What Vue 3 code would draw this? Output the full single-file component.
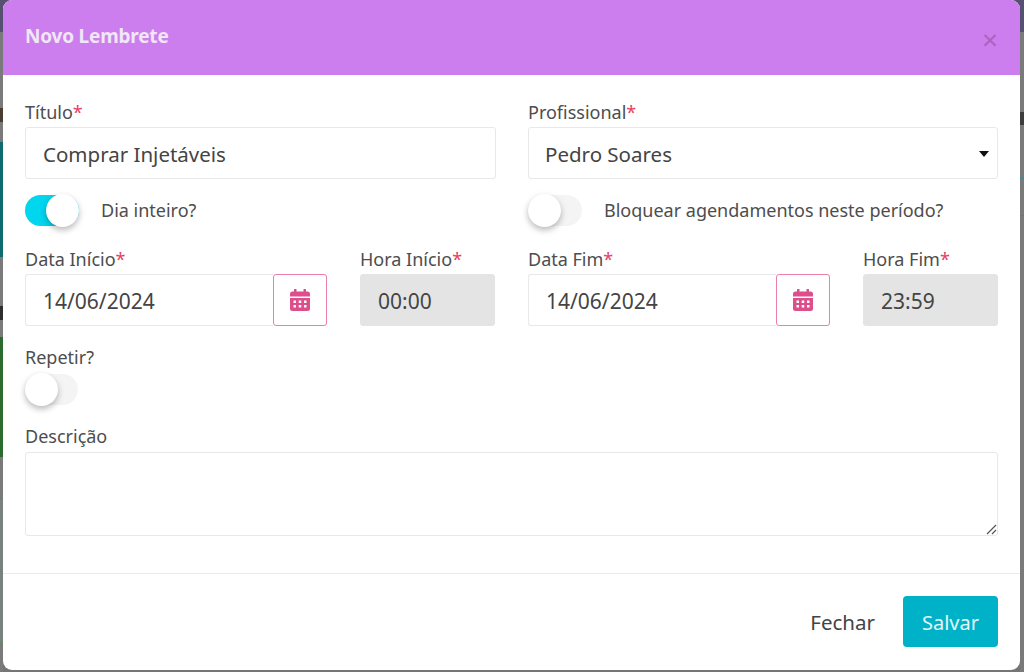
<script setup>
const calTop = 'M4 0h2.5v2.5h7V0H16v2.5h1.5A2.5 2.5 0 0 1 20 5v2.5H0V5a2.5 2.5 0 0 1 2.5-2.5H4z'
const calBottom = 'M0 9h20v10.5a2.5 2.5 0 0 1-2.5 2.5h-15A2.5 2.5 0 0 1 0 19.5z'
const dots = [3.5, 8.75, 14].flatMap((x) => [11.5, 16].map((y) => ({ x, y })))
</script>

<template>
  <div class="page">
    <div class="modal">
      <header class="head">
        <h1 class="title">Novo Lembrete</h1>
        <span class="close">×</span>
      </header>
      <main class="body">
        <div class="cols">
          <div class="col first">
            <label class="lbl">Título<b>*</b></label>
            <div class="input main">Comprar Injetáveis</div>
            <div class="switch-row">
              <span class="sw on"><i></i></span>
              <span class="sw-text">Dia inteiro?</span>
            </div>
            <div class="dates">
              <div class="date">
                <label class="lbl">Data Início<b>*</b></label>
                <div class="group">
                  <div class="input grow">14/06/2024</div>
                  <span class="cal">
                    <svg width="20" height="22" viewBox="0 0 20 22"><path fill="#dc4f8b" :d="calTop"/><path fill="#dc4f8b" :d="calBottom"/><rect v-for="d in dots" :key="d.x + '-' + d.y" :x="d.x" :y="d.y" width="2.5" height="2.5" fill="#fff"/></svg>
                  </span>
                </div>
              </div>
              <div class="time">
                <label class="lbl">Hora Início<b>*</b></label>
                <div class="input off">00:00</div>
              </div>
            </div>
          </div>
          <div class="col">
            <label class="lbl">Profissional<b>*</b></label>
            <div class="input main select">Pedro Soares<span class="caret"></span></div>
            <div class="switch-row">
              <span class="sw"><i></i></span>
              <span class="sw-text">Bloquear agendamentos neste período?</span>
            </div>
            <div class="dates">
              <div class="date">
                <label class="lbl">Data Fim<b>*</b></label>
                <div class="group">
                  <div class="input grow">14/06/2024</div>
                  <span class="cal">
                    <svg width="20" height="22" viewBox="0 0 20 22"><path fill="#dc4f8b" :d="calTop"/><path fill="#dc4f8b" :d="calBottom"/><rect v-for="d in dots" :key="d.x + '-' + d.y" :x="d.x" :y="d.y" width="2.5" height="2.5" fill="#fff"/></svg>
                  </span>
                </div>
              </div>
              <div class="time">
                <label class="lbl">Hora Fim<b>*</b></label>
                <div class="input off">23:59</div>
              </div>
            </div>
          </div>
        </div>
        <label class="lbl repeat">Repetir?</label>
        <span class="sw small"><i></i></span>
        <label class="lbl desc">Descrição</label>
        <div class="area">
          <svg class="grip" width="12" height="12" viewBox="0 0 12 12"><path d="M2 11 11 2M7 11l4-4" stroke="#555" stroke-width="1.2" fill="none"/></svg>
        </div>
      </main>
      <footer class="foot">
        <span class="btn-text">Fechar</span>
        <span class="btn-save">Salvar</span>
      </footer>
    </div>
  </div>
</template>

<style>
html, body { margin: 0; background: #757575; }
</style>

<style scoped>
.page {
  width: 1024px;
  height: 672px;
  box-sizing: border-box;
  padding: 0 4px 2px 3px;
  overflow: hidden;
  background:
    linear-gradient(to bottom, #565170 0 32px, #7a7a7a 32px 108px, #4a3c30 108px 122px, #7a7a7a 122px 142px, #0d6b70 142px 257px, #7a7a7a 257px 306px, #2e2e2e 306px 320px, #7a7a7a 320px 337px, #2a6b2f 337px 457px, #7a7a7a 457px 499px, #5f8a62 499px 500px, #788080 500px 642px, #5f8a62 642px 643px, #7a7a7a 643px) left top / 3px 100% no-repeat,
    linear-gradient(to bottom, #565170 0 32px, #7a7a7a 32px 112px, #3d3d3d 112px 125px, #7a7a7a 125px 178px, #3f8a8f 178px 179px, #7a7a7a 179px 215px, #3f8a8f 215px 216px, #7a7a7a 216px) right top / 4px 100% no-repeat,
    linear-gradient(#565170, #565170) top / 100% 12px no-repeat,
    #757575;
  font-family: "Noto Sans", "Open Sans", sans-serif;
  color: #444;
}
.modal {
  height: 100%;
  background: #fff;
  border-radius: 9px;
  display: flex;
  flex-direction: column;
  overflow: hidden;
}
.head {
  height: 75px;
  flex: none;
  background: #cd7eee;
  display: flex;
  align-items: center;
  justify-content: space-between;
  padding: 0 22px 3px 22px;
  box-sizing: border-box;
}
.title {
  margin: 0;
  font-size: 19px;
  font-weight: 700;
  color: #f0e6f5;
  letter-spacing: -0.2px;
}
.close {
  font-size: 28px;
  color: #a963c4;
  line-height: 1;
  margin-top: 6px;
}
.body {
  flex: 1;
  padding: 26px 22px 0;
  min-height: 0;
}
.cols {
  display: flex;
  gap: 32px;
}
.col {
  flex: 1;
  min-width: 0;
}
.first {
  flex: none;
  width: 471px;
}
.lbl {
  display: block;
  font-size: 18px;
  line-height: 22px;
  height: 26px;
  color: #4d4d4d;
}
.lbl b {
  color: #e8405f;
  font-weight: 400;
}
.input {
  height: 52px;
  box-sizing: border-box;
  border: 1px solid #e6e8ea;
  border-radius: 3px;
  font-size: 21px;
  line-height: 52px;
  padding: 0 17px;
  color: #444;
  background: #fff;
}
.main {
  font-size: 20.5px;
}
.select {
  position: relative;
  padding-left: 16px;
}
.caret {
  position: absolute;
  right: 8px;
  top: 23px;
  border-left: 5.5px solid transparent;
  border-right: 5.5px solid transparent;
  border-top: 6px solid #111;
}
.switch-row {
  display: flex;
  align-items: center;
  gap: 22px;
  margin-top: 13px;
  height: 36px;
}
.sw-text {
  font-size: 18px;
  color: #4d4d4d;
}
.sw {
  flex: none;
  display: block;
  position: relative;
  width: 54px;
  height: 31px;
  border-radius: 16px;
  background: #f4f4f4;
}
.sw i {
  position: absolute;
  left: 0;
  top: -1px;
  width: 33px;
  height: 33px;
  border-radius: 50%;
  background: #fff;
  box-shadow: 0 3px 6px rgba(0, 0, 0, 0.28);
}
.sw.on {
  background: #00d6ee;
}
.sw.on i {
  left: 21px;
}
.dates {
  display: flex;
  margin-top: 20px;
  gap: 33px;
}
.date {
  width: 302px;
  flex: none;
}
.time {
  flex: none;
  width: 135px;
}
.group {
  display: flex;
}
.grow {
  flex: 1;
  min-width: 0;
  border-right: 0;
  border-radius: 3px 0 0 3px;
}
.cal {
  flex: none;
  width: 54px;
  height: 52px;
  box-sizing: border-box;
  border: 1px solid #e880a9;
  border-radius: 3px;
  display: flex;
  align-items: center;
  justify-content: center;
}
.off {
  background: #e4e4e4;
  border-color: #e4e4e4;
}
.repeat {
  margin-top: 20px;
}
.small {
  margin-top: 2px;
  width: 53px;
}
.desc {
  margin-top: 20px;
  height: 27px;
}
.area {
  position: relative;
  height: 84px;
  box-sizing: border-box;
  border: 1px solid #e6e8ea;
  border-radius: 3px;
}
.grip {
  position: absolute;
  right: 0;
  bottom: 0;
}
.foot {
  flex: none;
  height: 97px;
  box-sizing: border-box;
  border-top: 1px solid #e9ebec;
  display: flex;
  align-items: flex-start;
  justify-content: flex-end;
  padding: 22px 22px 0 0;
  gap: 28px;
}
.btn-text {
  font-size: 20.5px;
  line-height: 52px;
  color: #444;
}
.btn-save {
  width: 95px;
  height: 51px;
  line-height: 54px;
  text-align: center;
  border-radius: 4px;
  background: #00b2c8;
  color: #e5f6f8;
  font-size: 20px;
}
</style>
